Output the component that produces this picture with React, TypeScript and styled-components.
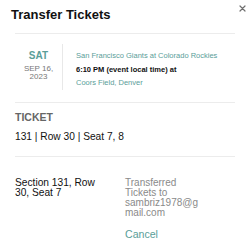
import styled, { createGlobalStyle } from "styled-components";

const GlobalStyle = createGlobalStyle`
  body {
    margin: 0;
    background: #fff;
    font-family: "Liberation Sans", Arial, sans-serif;
  }
`;

const teal = "#5a9e99";

const Page = styled.div`
  width: 250px;
  height: 250px;
  padding: 0 15px;
  box-sizing: border-box;
  overflow: hidden;
`;

const Header = styled.div`
  display: flex;
  justify-content: space-between;
  align-items: flex-start;
  margin: 0 -11px 0 -4px;
  padding-top: 7px;
`;

const Title = styled.h1`
  margin: 0;
  font-size: 13px;
  line-height: 16px;
  font-weight: 700;
  color: #111;
`;

const CloseButton = styled.button`
  display: flex;
  width: 7px;
  height: 7px;
  margin-top: -2px;
  padding: 0;
  border: 0;
  background: none;
  cursor: pointer;
`;

const Divider = styled.hr<{ $top: number }>`
  margin: ${(p) => p.$top}px 0 0;
  height: 0;
  border: 0;
  border-top: 1px solid #ececec;
`;

const EventRow = styled.div`
  display: flex;
  margin-top: 10px;
`;

const DateCol = styled.div`
  width: 48px;
  box-sizing: border-box;
  padding-top: 6px;
  border-right: 1px solid #e8e8e8;
  text-align: center;
`;

const DayName = styled.div`
  margin-bottom: 3px;
  font-size: 10px;
  line-height: 12px;
  font-weight: 700;
  color: ${teal};
`;

const DateText = styled.div`
  font-size: 8px;
  line-height: 8px;
  color: #777;
`;

const InfoCol = styled.div`
  padding: 5px 0 0 13px;
`;

const InfoLine = styled.div<{ $strong?: boolean }>`
  font-size: 7.5px;
  line-height: 13.5px;
  font-weight: ${(p) => (p.$strong ? 700 : 400)};
  color: ${(p) => (p.$strong ? "#111" : teal)};
  white-space: nowrap;
`;

const SectionLabel = styled.div`
  margin-top: 8px;
  font-size: 10.5px;
  line-height: 13px;
  font-weight: 700;
  color: #666;
`;

const Seats = styled.div`
  margin-top: 6px;
  font-size: 10.2px;
  line-height: 13px;
  color: #111;
`;

const SeatGrid = styled.div`
  display: grid;
  grid-template-columns: 95px 78px;
  column-gap: 15px;
  margin-top: 21px;
`;

const SeatName = styled.div`
  font-size: 10.2px;
  line-height: 10px;
  color: #111;
`;

const TransferNote = styled.div`
  font-size: 10px;
  line-height: 10px;
  color: #8a8a8a;
  overflow-wrap: break-word;
`;

const CancelLink = styled.button`
  display: block;
  margin-top: 10px;
  padding: 0;
  border: 0;
  background: none;
  font-family: inherit;
  font-size: 10.6px;
  line-height: 13px;
  font-weight: 500;
  color: ${teal};
  cursor: pointer;
`;

const App = () => {
  return (
    <>
      <GlobalStyle />
      <Page>
        <Header>
          <Title>Transfer Tickets</Title>
          <CloseButton aria-label="Close">
            <svg width="7" height="7" viewBox="0 0 7 7">
              <path d="M1 1 L6 6 M6 1 L1 6" stroke="#6f6f6f" strokeWidth="1.2" strokeLinecap="round" />
            </svg>
          </CloseButton>
        </Header>
        <Divider $top={10} />
        <EventRow>
          <DateCol>
            <DayName>SAT</DayName>
            <DateText>SEP 16,</DateText>
            <DateText>2023</DateText>
          </DateCol>
          <InfoCol>
            <InfoLine>San Francisco Giants at Colorado Rockies</InfoLine>
            <InfoLine $strong>6:10 PM (event local time) at</InfoLine>
            <InfoLine>Coors Field, Denver</InfoLine>
          </InfoCol>
        </EventRow>
        <Divider $top={12} />
        <SectionLabel>TICKET</SectionLabel>
        <Seats>131 | Row 30 | Seat 7, 8</Seats>
        <Divider $top={13} />
        <SeatGrid>
          <SeatName>Section 131, Row 30, Seat 7</SeatName>
          <div>
            <TransferNote>Transferred Tickets to sambriz1978@gmail.com</TransferNote>
            <CancelLink>Cancel</CancelLink>
          </div>
        </SeatGrid>
      </Page>
    </>
  );
};

export default App;
